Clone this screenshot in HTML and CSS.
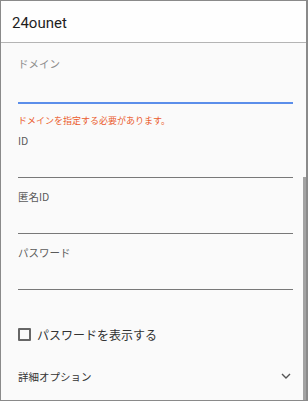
FILE: index.html
```html
<!DOCTYPE html>
<html lang="ja">
<head>
<meta charset="utf-8">
<link rel="stylesheet" href="styles.css">
</head>
<body>
<div class="frame">
  <header class="header">24ounet</header>
  <main class="body">
    <div class="field first">
      <div class="label light">ドメイン</div>
      <div class="input focused"></div>
    </div>
    <div class="error">ドメインを指定する必要があります。</div>
    <div class="field tight">
      <div class="label">ID</div>
      <div class="input"></div>
    </div>
    <div class="field">
      <div class="label">匿名ID</div>
      <div class="input"></div>
    </div>
    <div class="field">
      <div class="label">パスワード</div>
      <div class="input"></div>
    </div>
    <label class="check">
      <span class="box"></span>
      <span class="check-text">パスワードを表示する</span>
    </label>
    <div class="details">
      <span class="details-text">詳細オプション</span>
      <svg class="chev" width="10" height="6" viewBox="0 0 10 6"><path d="M1 1 L5 5 L9 1" fill="none" stroke="#555" stroke-width="1.4"/></svg>
    </div>
  </main>
  <div class="scrollbar"></div>
</div>
</body>
</html>
```
FILE: styles.css
```css
html, body { margin: 0; padding: 0; }
body {
  font-family: "Noto Sans CJK JP", Roboto, sans-serif;
  background: #fafafa;
}
.frame {
  position: relative;
  width: 308px;
  height: 401px;
  box-sizing: border-box;
  border: 1px solid #8a8a8a;
  border-right-width: 2px;
  background: #fafafa;
  overflow: hidden;
}
.header {
  height: 42px;
  box-sizing: border-box;
  border-bottom: 1px solid #b4b4b4;
  background: #fefefe;
  font-family: Roboto, "Noto Sans CJK JP", sans-serif;
  font-size: 15px;
  color: #1e1e1e;
  display: flex;
  align-items: center;
  padding-left: 11px;
  padding-top: 2px;
}
.body {
  padding: 0 13px 0 17px;
}
.field { padding-top: 12px; }
.field.first { padding-top: 14px; }
.field.tight { padding-top: 6px; }
.label {
  font-size: 10.5px;
  line-height: 14px;
  color: #5a5a5a;
}
.label.light { color: #8c8c8c; }
.input {
  height: 29px;
  border-bottom: 1px solid #787878;
}
.input.focused {
  height: 31px;
  border-bottom: 2px solid #5b8eea;
}
.error {
  margin-top: 10px;
  font-size: 9px;
  line-height: 14px;
  color: #ea5a2c;
}
.check {
  margin-top: 32px;
  height: 24px;
  display: flex;
  align-items: center;
  gap: 6px;
}
.box {
  width: 13px;
  height: 13px;
  box-sizing: border-box;
  border: 2px solid #666;
  border-radius: 1px;
}
.check-text {
  font-size: 12px;
  color: #333;
}
.details {
  margin-top: 15px;
  height: 30px;
  display: flex;
  align-items: center;
  justify-content: space-between;
  padding-right: 2px;
}
.details-text {
  font-size: 10.5px;
  color: #333;
}
.scrollbar {
  position: absolute;
  right: 0;
  top: 176px;
  bottom: 0;
  width: 3px;
  background: #a3a3a3;
}
```
